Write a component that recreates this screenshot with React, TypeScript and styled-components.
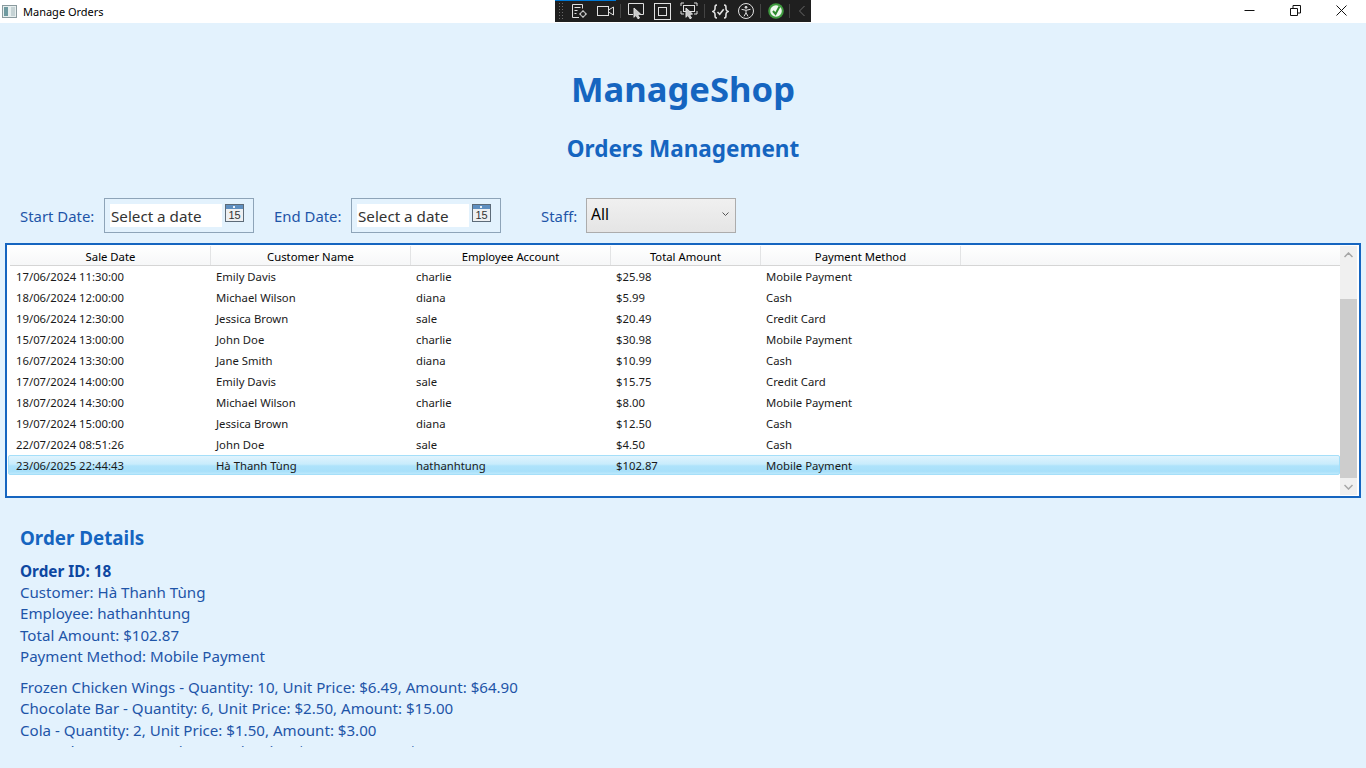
import React from 'react'
import styled, { createGlobalStyle } from 'styled-components'

const GlobalStyle = createGlobalStyle`
  html, body {
    margin: 0;
    padding: 0;
    height: 100%;
    overflow: hidden;
    background: #e3f2fd;
    font-family: "Noto Sans", "Open Sans", sans-serif;
  }
`

const Window = styled.div`
  width: 1366px;
  height: 768px;
  display: flex;
  flex-direction: column;
  position: relative;
  overflow: hidden;
`

const TitleBar = styled.div`
  height: 23px;
  flex: none;
  background: #fff;
  display: flex;
  align-items: center;
  padding-left: 2px;
  gap: 6px;
`

const TitleText = styled.span`
  font-size: 11px;
  color: #000;
`

const WindowButtons = styled.div`
  margin-left: auto;
  margin-right: 2px;
  display: flex;
  height: 100%;
  margin-top: -3px;
`

const WindowButton = styled.div`
  width: 46px;
  height: 100%;
  display: flex;
  align-items: center;
  justify-content: center;
`

const DebugBar = styled.div`
  position: absolute;
  left: 555px;
  top: 0;
  width: 256px;
  height: 22px;
  background: #1f1f1f;
  display: flex;
  align-items: center;
  padding-left: 3px;
  box-sizing: border-box;
  color: #e0e0e0;
`

const DebugProgress = styled.div`
  position: absolute;
  left: 0;
  top: 0;
  width: 61px;
  height: 1px;
  background: #0078d4;
`

const Grip = styled.div`
  width: 7px;
  height: 18px;
  flex: none;
  margin-right: 7px;
  background-image: radial-gradient(#6a6a6a 0.7px, transparent 0.8px);
  background-size: 3px 3px;
`

const DebugSeparator = styled.div<{ $gap: number }>`
  width: 1px;
  height: 14px;
  flex: none;
  background: #444;
  margin: 0 ${p => p.$gap}px 0 ${p => p.$gap - 1}px;
`

const DebugIcon = styled.svg<{ $gap?: number; $before?: number }>`
  flex: none;
  margin-right: ${p => p.$gap ?? 0}px;
  margin-left: ${p => p.$before ?? 0}px;
`

const Main = styled.div`
  flex: 1;
  display: flex;
  flex-direction: column;
  background: #e3f2fd;
`

const Heading = styled.h1`
  margin: 41px 0 0;
  text-align: center;
  font-size: 34.6px;
  line-height: 50px;
  font-weight: 700;
  color: #1565c0;
`

const SubHeading = styled.h2`
  margin: 19px 0 0;
  text-align: center;
  font-size: 22.5px;
  line-height: 32px;
  font-weight: 700;
  color: #1565c0;
`

const FilterRow = styled.div`
  margin-top: 33px;
  padding-left: 20px;
  display: flex;
  align-items: center;
  height: 35px;
`

const FilterLabel = styled.label<{ $width: number }>`
  width: ${p => p.$width}px;
  font-size: 14.9px;
  color: #1e55a8;
`

const DateBox = styled.div<{ $after: number }>`
  width: 150px;
  height: 35px;
  box-sizing: border-box;
  border: 1px solid #8ea4b8;
  margin-right: ${p => p.$after}px;
  display: flex;
  align-items: center;
  padding: 0 9px 0 5px;
  justify-content: space-between;
`

const DateText = styled.div`
  width: 112px;
  height: 23px;
  background: #fff;
  font-size: 15.2px;
  line-height: 24px;
  color: #333;
  box-sizing: border-box;
  padding-left: 1px;
  white-space: nowrap;
`

const CalendarSvg = styled.svg`
  margin-top: -6px;
`

const StaffSelect = styled.div`
  width: 150px;
  height: 35px;
  box-sizing: border-box;
  border: 1px solid #acacac;
  background: linear-gradient(#f0f0f0, #e5e5e5);
  display: flex;
  justify-content: space-between;
  padding: 4px 6px 0 4px;
  font-size: 15.5px;
  line-height: 22px;
  color: #000;
`

const Chevron = styled.svg`
  margin-top: 9px;
`

const GridFrame = styled.div`
  margin: 10px 5px 0;
  height: 255px;
  box-sizing: border-box;
  border: 2px solid #1565c0;
  background: #fff;
  display: flex;
`

const GridBody = styled.div`
  flex: 1;
  padding: 1px 0 0 3px;
  min-width: 0;
`

const HeaderRow = styled.div`
  height: 19px;
  display: flex;
  padding-left: 1px;
  background: linear-gradient(#fff, #f6f7f8);
  border-bottom: 1px solid #d5d5d5;
`

const HeaderCell = styled.div<{ $w: number }>`
  width: ${p => p.$w}px;
  box-sizing: border-box;
  border-right: 1px solid #e3e4e5;
  text-align: center;
  font-size: 11.3px;
  line-height: 21px;
  color: #000;
`

const Row = styled.div<{ $selected?: boolean }>`
  height: 21px;
  display: flex;
  box-sizing: border-box;
  margin-left: 1px;
  ${p =>
    p.$selected &&
    `
    height: 20px;
    margin-left: -2px;
    padding-left: 2px;
    border: 1px solid #a5dff9;
    border-radius: 2px;
    background: linear-gradient(#e0f3fd 0%, #c8ecfc 45%, #aee3fb 55%, #a8e0fa 85%, #bde9fc 100%);
  `}
`

const Cell = styled.div<{ $w: number; $selected?: boolean }>`
  width: ${p => p.$w}px;
  box-sizing: border-box;
  padding-left: 5px;
  font-size: 11.3px;
  line-height: ${p => (p.$selected ? 19 : 21)}px;
  color: #1a1a1a;
  white-space: nowrap;
  flex: none;
`

const ScrollTrack = styled.div`
  width: 17px;
  margin: 1px 2px 0 0;
  height: 249px;
  background: #f0f0f0;
  display: flex;
  flex-direction: column;
  align-items: center;
`

const ScrollArrow = styled.div`
  height: 17px;
  flex: none;
  display: flex;
  align-items: center;
  justify-content: center;
`

const ScrollThumb = styled.div`
  width: 17px;
  height: 179px;
  margin-top: 36px;
  flex: none;
  background: #cdcdcd;
`

const Details = styled.section`
  padding: 0 20px;
  margin-top: 26px;
  height: 224px;
  overflow: hidden;
  color: #1e55a8;
`

const DetailsTitle = styled.h3`
  margin: 0;
  font-size: 18.8px;
  line-height: 28px;
  font-weight: 700;
  color: #1565c0;
`

const OrderId = styled.div`
  margin-top: 9px;
  font-size: 15.3px;
  line-height: 21px;
  font-weight: 700;
  color: #0d47a1;
`

const InfoLine = styled.div`
  font-size: 15.1px;
  line-height: 21.3px;
  white-space: nowrap;
`

const Items = styled.div`
  margin-top: 10px;
  height: 70px;
  overflow: hidden;
`

const COLUMNS = [200, 200, 200, 150, 200]
const HEADERS = ['Sale Date', 'Customer Name', 'Employee Account', 'Total Amount', 'Payment Method']
const ORDERS = [
  ['17/06/2024 11:30:00', 'Emily Davis', 'charlie', '$25.98', 'Mobile Payment'],
  ['18/06/2024 12:00:00', 'Michael Wilson', 'diana', '$5.99', 'Cash'],
  ['19/06/2024 12:30:00', 'Jessica Brown', 'sale', '$20.49', 'Credit Card'],
  ['15/07/2024 13:00:00', 'John Doe', 'charlie', '$30.98', 'Mobile Payment'],
  ['16/07/2024 13:30:00', 'Jane Smith', 'diana', '$10.99', 'Cash'],
  ['17/07/2024 14:00:00', 'Emily Davis', 'sale', '$15.75', 'Credit Card'],
  ['18/07/2024 14:30:00', 'Michael Wilson', 'charlie', '$8.00', 'Mobile Payment'],
  ['19/07/2024 15:00:00', 'Jessica Brown', 'diana', '$12.50', 'Cash'],
  ['22/07/2024 08:51:26', 'John Doe', 'sale', '$4.50', 'Cash'],
  ['23/06/2025 22:44:43', 'Hà Thanh Tùng', 'hathanhtung', '$102.87', 'Mobile Payment'],
]

function CalendarIcon() {
  return (
    <CalendarSvg width="19" height="18" viewBox="0 0 19 18">
      <rect x="0.5" y="0.5" width="18" height="17" fill="#eef0f2" stroke="#5d6b78" />
      <rect x="1" y="1" width="17" height="4" fill="#5f8fc0" />
      <rect x="8" y="2" width="2" height="2" fill="#e8f0f8" />
      <text x="9.5" y="15" textAnchor="middle" fontSize="11" fontFamily="Liberation Sans" fill="#333">15</text>
    </CalendarSvg>
  )
}

export default function App() {
  const lastRow = ORDERS.length - 1
  return (
    <Window>
      <GlobalStyle />
      <TitleBar>
        <svg width="15" height="15" viewBox="0 0 15 15">
          <rect x="0.5" y="1.5" width="14" height="12" fill="#e6eeee" stroke="#8a9a9e" />
          <rect x="2" y="3" width="4" height="9" fill="#6f9aa0" />
          <rect x="9" y="3" width="4" height="9" fill="#c6d3d5" />
        </svg>
        <TitleText>Manage Orders</TitleText>
        <WindowButtons>
          <WindowButton>
            <svg width="11" height="11" viewBox="0 0 11 11"><path d="M0.5 5.5h10" stroke="#111" fill="none" /></svg>
          </WindowButton>
          <WindowButton>
            <svg width="11" height="11" viewBox="0 0 11 11" fill="none" stroke="#111"><path d="M0.5 3.5h7v7h-7z M3 3.5V0.5h7.5v7.5H7.5" /></svg>
          </WindowButton>
          <WindowButton>
            <svg width="11" height="11" viewBox="0 0 11 11"><path d="M0.5 0.5l10 10M10.5 0.5l-10 10" stroke="#111" fill="none" /></svg>
          </WindowButton>
        </WindowButtons>
      </TitleBar>

      <DebugBar>
        <DebugProgress />
        <Grip />
        <DebugIcon $gap={9} width="16" height="16" viewBox="0 0 16 16" fill="none" stroke="#e0e0e0">
          <path d="M7 14.500H0.500v-13h10v4M2.500 4.500h6M2.500 7.500h3M2.500 10.500h2" />
          <circle cx="11" cy="11" r="2.500" />
          <path d="M11 7v1.500M11 13.500V15M7 11h1.500M13.500 11H15" />
        </DebugIcon>
        <DebugIcon width="17" height="12" viewBox="0 0 17 12" fill="none" stroke="#e0e0e0">
          <rect x="0.500" y="1.500" width="11" height="9" />
          <path d="M11.500 5l5-3v8l-5-3" />
        </DebugIcon>
        <DebugSeparator $gap={7} />
        <DebugIcon $gap={9} width="17" height="18" viewBox="0 0 17 18" fill="none" stroke="#e0e0e0">
          <path d="M5 12.500H0.500v-11h15v11h-4" />
          <path d="M6 6l6.500 6-3 .5 2 3.500-1.500.8-2-3.500-2 2z" fill="#c8c8c8" />
        </DebugIcon>
        <DebugIcon $gap={9} width="17" height="17" viewBox="0 0 17 17" fill="none" stroke="#e0e0e0">
          <rect x="0.500" y="0.500" width="16" height="16" />
          <rect x="4.500" y="4.500" width="8" height="8" />
        </DebugIcon>
        <DebugIcon width="18" height="18" viewBox="0 0 18 18" fill="none" stroke="#e0e0e0">
          <path d="M4 1H1v3M14 1h3v3M1 9v3h3M17 9v3h-3" />
          <rect x="3.500" y="3.500" width="11" height="6" />
          <path d="M6 6l6.500 6-3 .5 2 3.500-1.500.8-2-3.500-2 2z" fill="#c8c8c8" />
        </DebugIcon>
        <DebugSeparator $gap={7} />
        <DebugIcon $gap={9} width="17" height="15" viewBox="0 0 17 15" fill="none" stroke="#e0e0e0">
          <path d="M5 1C3 1 3 2 3 5c0 1-1 2-2 2.500C2 8 3 9 3 10c0 3 0 4 2 4M12 1c2 0 2 1 2 4 0 1 1 2 2 2.500C15 8 14 9 14 10c0 3 0 4-2 4" strokeWidth="1.600" />
          <path d="M5.500 8l2.200 2.200 4-5" strokeWidth="1.600" />
        </DebugIcon>
        <DebugIcon width="16" height="16" viewBox="0 0 16 16" fill="none" stroke="#e0e0e0">
          <circle cx="8" cy="8" r="7.500" />
          <circle cx="8" cy="4.300" r="1" fill="#e0e0e0" />
          <path d="M3.500 6.300l4.500 1 4.500-1M8 7.300v2.500l-2 3.500M8 9.800l2 3.500" />
        </DebugIcon>
        <DebugSeparator $gap={7} />
        <DebugIcon width="16" height="16" viewBox="0 0 16 16">
          <circle cx="8" cy="8" r="7.800" fill="#3f9b3f" />
          <circle cx="8" cy="8" r="5.800" fill="#eef8ee" />
          <path d="M5 8l2.500 3L11.500 3.500" fill="none" stroke="#2e8b2e" strokeWidth="2" />
        </DebugIcon>
        <DebugSeparator $gap={6} />
        <DebugIcon $before={2} width="8" height="12" viewBox="0 0 8 12" fill="none" stroke="#6a6a6a">
          <path d="M6.500 1L1.500 6l5 5" />
        </DebugIcon>
      </DebugBar>

      <Main>
        <Heading>ManageShop</Heading>
        <SubHeading>Orders Management</SubHeading>

        <FilterRow>
          <FilterLabel $width={84}>Start Date:</FilterLabel>
          <DateBox $after={20}>
            <DateText>Select a date</DateText>
            <CalendarIcon />
          </DateBox>
          <FilterLabel $width={77}>End Date:</FilterLabel>
          <DateBox $after={40}>
            <DateText>Select a date</DateText>
            <CalendarIcon />
          </DateBox>
          <FilterLabel $width={45}>Staff:</FilterLabel>
          <StaffSelect>
            All
            <Chevron width="7" height="5" viewBox="0 0 7 5" fill="none" stroke="#555">
              <path d="M0.500 0.500l3 3 3-3" />
            </Chevron>
          </StaffSelect>
        </FilterRow>

        <GridFrame>
          <GridBody>
            <HeaderRow>
              {HEADERS.map((h, i) => (
                <HeaderCell key={h} $w={COLUMNS[i]}>{h}</HeaderCell>
              ))}
            </HeaderRow>
            {ORDERS.map((order, r) => (
              <Row key={order[0]} $selected={r === lastRow}>
                {order.map((value, i) => (
                  <Cell key={i} $w={COLUMNS[i]} $selected={r === lastRow}>{value}</Cell>
                ))}
              </Row>
            ))}
          </GridBody>
          <ScrollTrack>
            <ScrollArrow>
              <svg width="9" height="6" viewBox="0 0 9 6" fill="none" stroke="#a6a6a6" strokeWidth="1.500"><path d="M0.500 5l4-4 4 4" /></svg>
            </ScrollArrow>
            <ScrollThumb />
            <ScrollArrow>
              <svg width="9" height="6" viewBox="0 0 9 6" fill="none" stroke="#a6a6a6" strokeWidth="1.500"><path d="M0.500 1l4 4 4-4" /></svg>
            </ScrollArrow>
          </ScrollTrack>
        </GridFrame>

        <Details>
          <DetailsTitle>Order Details</DetailsTitle>
          <OrderId>Order ID: 18</OrderId>
          <InfoLine>Customer: Hà Thanh Tùng</InfoLine>
          <InfoLine>Employee: hathanhtung</InfoLine>
          <InfoLine>Total Amount: $102.87</InfoLine>
          <InfoLine>Payment Method: Mobile Payment</InfoLine>
          <Items>
            <InfoLine>Frozen Chicken Wings - Quantity: 10, Unit Price: $6.49, Amount: $64.90</InfoLine>
            <InfoLine>Chocolate Bar - Quantity: 6, Unit Price: $2.50, Amount: $15.00</InfoLine>
            <InfoLine>Cola - Quantity: 2, Unit Price: $1.50, Amount: $3.00</InfoLine>
            <InfoLine>Canned Beans - Quantity: 3, Unit Price: $5.99, Amount: $17.97</InfoLine>
          </Items>
        </Details>
      </Main>
    </Window>
  )
}
